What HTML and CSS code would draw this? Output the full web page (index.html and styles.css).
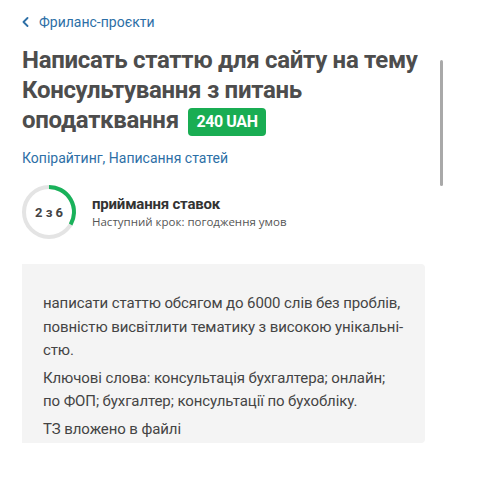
FILE: index.html
```html
<!DOCTYPE html>
<html lang="uk">
<head>
<meta charset="utf-8">
<link rel="stylesheet" href="styles.css">
</head>
<body>
<div class="page">
  <a class="back" href="#">
    <svg class="chev" width="7" height="10" viewBox="0 0 7 10"><path d="M5.5 1 L1.5 5 L5.5 9" fill="none" stroke="#2d6fa6" stroke-width="1.8" stroke-linecap="round" stroke-linejoin="round"/></svg>
    <span>Фриланс-проєкти</span>
  </a>
  <h1 class="title">Написать статтю для сайту на тему Консультування з питань оподатквання <span class="badge">240&nbsp;UAH</span></h1>
  <div class="tags"><a href="#">Копірайтинг</a>, <a href="#">Написання статей</a></div>
  <div class="status">
    <div class="ring">
      <svg width="58" height="58" viewBox="0 0 58 58">
        <circle cx="29" cy="29" r="25" fill="none" stroke="#e4e4e4" stroke-width="4"/>
        <path d="M29 4 A25 25 0 0 1 50.65 41.5" fill="none" stroke="#19b25a" stroke-width="4"/>
      </svg>
      <span class="ring-text">2 з 6</span>
    </div>
    <div class="status-info">
      <div class="status-name">приймання ставок</div>
      <div class="status-next">Наступний крок: погодження умов</div>
    </div>
  </div>
  <div class="desc">
    <p>написати статтю обсягом до 6000 слів без проблів, повністю висвітлити тематику з високою унікальні&shy;стю.</p>
    <p>Ключові слова: консультація бухгалтера; онлайн; по ФОП; бухгалтер; консультації по бухобліку.</p>
    <p>ТЗ вложено в файлі</p>
  </div>
  <div class="scrollbar"></div>
</div>
</body>
</html>
```

FILE: styles.css
```css
html, body {
  margin: 0;
  padding: 0;
  background: #fff;
}
body {
  font-family: Roboto, "Noto Sans", sans-serif;
  color: #4a4a4a;
}
.page {
  position: relative;
  padding: 12px 61px 0 22px;
  width: 486px;
  height: 494px;
  box-sizing: border-box;
}
.back {
  display: flex;
  align-items: center;
  gap: 10px;
  text-decoration: none;
  color: #2d6fa6;
  font-size: 14px;
  height: 20px;
}
.chev { display: block; }
.title {
  margin: 13px -8px 0 0;
  font-size: 24px;
  line-height: 30px;
  font-weight: 700;
  color: #4d4d4d;
  letter-spacing: -0.3px;
}
.badge {
  display: inline-block;
  background: #19ad53;
  color: #fff;
  font-size: 16px;
  line-height: 28px;
  padding: 0 8px;
  border-radius: 4px;
  vertical-align: 1px;
  margin-left: 4px;
  letter-spacing: -0.4px;
}
.tags {
  margin-top: 14px;
  font-size: 14px;
  color: #2d6fa6;
}
.tags a { color: #2d6fa6; text-decoration: none; }
.status {
  display: flex;
  align-items: center;
  gap: 14px;
  margin-top: 17px;
}
.ring {
  position: relative;
  width: 58px;
  height: 58px;
  margin-left: -2px;
}
.ring svg { display: block; }
.ring-text {
  position: absolute;
  inset: 0;
  display: flex;
  align-items: center;
  justify-content: center;
  font-size: 13px;
  font-weight: 700;
  color: #444;
}
.status-name {
  font-size: 15px;
  font-weight: 700;
  color: #333;
  line-height: 18px;
  letter-spacing: -0.2px;
}
.status-next {
  font-family: "Open Sans", sans-serif;
  font-size: 11.5px;
  color: #555;
  line-height: 16px;
  margin-top: 1px;
}
.desc {
  margin-top: 23px;
  background: #f4f4f4;
  border-radius: 0 4px 4px 0;
  padding: 28px 21px 3px 21px;
  height: 179px;
  box-sizing: border-box;
  font-size: 15px;
  line-height: 23.5px;
  color: #444;
  letter-spacing: -0.1px;
}
.desc p { margin: 0 0 4px 0; }
.scrollbar {
  position: absolute;
  left: 440px;
  top: 60px;
  width: 3px;
  height: 126px;
  background: #a9a9a9;
  border-radius: 2px;
}
```
